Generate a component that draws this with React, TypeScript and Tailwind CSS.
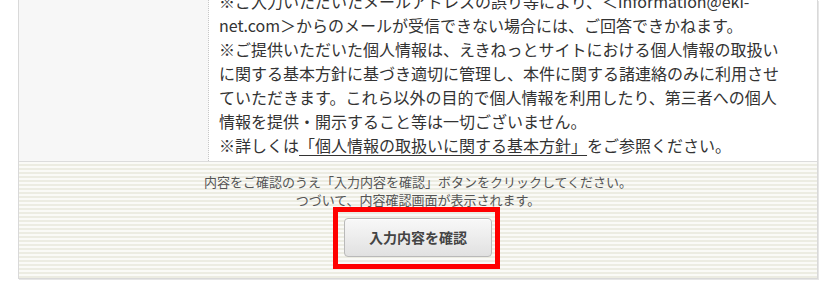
export default function App() {
  const lines = [
    "※ご入力いただいたメールアドレスの誤り等により、＜information@eki-",
    "net.com＞からのメールが受信できない場合には、ご回答できかねます。",
    "※ご提供いただいた個人情報は、えきねっとサイトにおける個人情報の取扱い",
    "に関する基本方針に基づき適切に管理し、本件に関する諸連絡のみに利用させ",
    "ていただきます。これら以外の目的で個人情報を利用したり、第三者への個人",
    "情報を提供・開示すること等は一切ございません。",
  ];

  return (
    <div
      className="h-[296px] w-[837px] overflow-hidden bg-white text-[#333]"
      style={{ fontFamily: '"Noto Sans CJK JP", "Noto Sans", sans-serif' }}
    >
      <div className="ml-[18px] w-[800px] border-x border-b border-[#d9d9d9] shadow-[1px_1px_0_#e6e6e6]">
        {/* 入力表の最終行 */}
        <div className="flex border-b border-[#dcdcdc]">
          <div className="w-[190px] shrink-0 border-r border-dotted border-[#c8c8c8] bg-[#f7f7f7]" />
          <div className="-mt-[11px] pb-[4px] pl-[10px] text-[16px] leading-[24px]">
            {lines.map((l, i) => (
              <div key={i} className="whitespace-nowrap">
                {l}
              </div>
            ))}
            <div className="whitespace-nowrap">
              ※詳しくは
              <a className="underline underline-offset-[3px]">
                「個人情報の取扱いに関する基本方針」
              </a>
              をご参照ください。
            </div>
          </div>
        </div>

        {/* 確認ボタン */}
        <div className="flex flex-col items-center bg-[image:repeating-linear-gradient(to_bottom,#fafaf7_0px,#fafaf7_2px,#ecece2_2px,#ecece2_4px)] pb-[21px] pt-[11px]">
          <p className="text-center text-[13px] leading-[18px] text-[#555]">
            内容をご確認のうえ「入力内容を確認」ボタンをクリックしてください。
            <br />
            つづいて、内容確認画面が表示されます。
          </p>
          <div className="relative mt-[9px]">
            <button className="h-[39px] w-[148px] rounded-[4px] border border-[#b9b9b9] bg-linear-to-b from-[#f8f8f8] to-[#e1e1e1] text-[14px] font-bold text-[#444] shadow-[inset_0_1px_0_#fff]">
              入力内容を確認
            </button>
            <div className="pointer-events-none absolute -bottom-[12px] -left-[11px] -right-[8px] -top-[11px] border-[5px] border-[#ff0000]" />
          </div>
        </div>
      </div>
    </div>
  );
}
